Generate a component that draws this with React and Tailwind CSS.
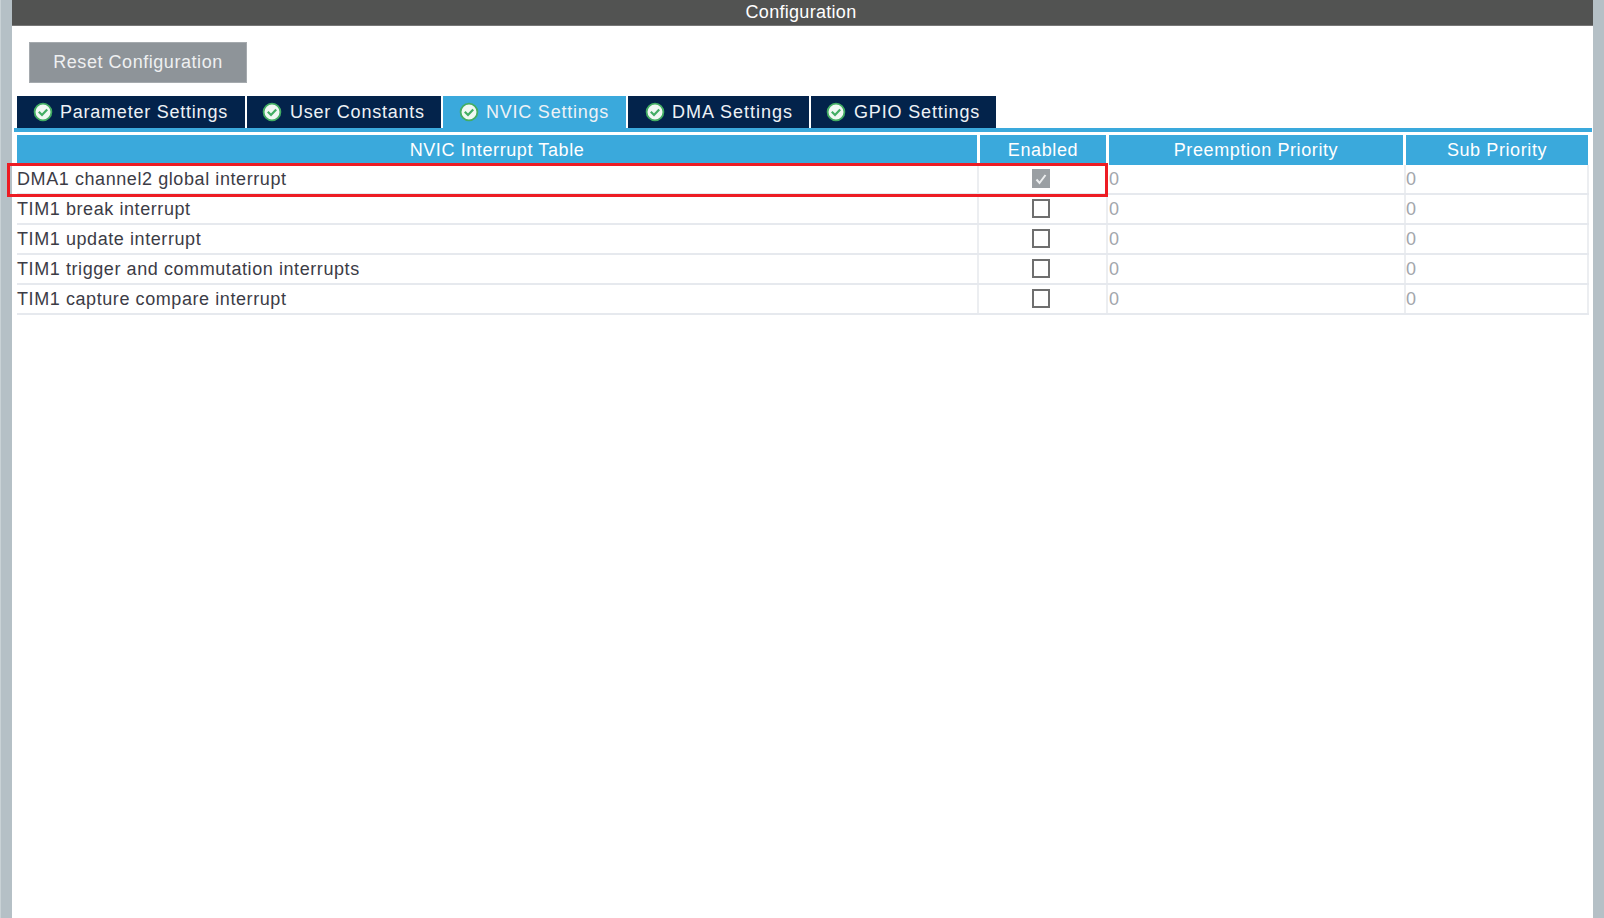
import React from 'react';

const tabs = [
  { name: 'Parameter Settings', width: 'w-[230px]', pad: 'pl-[16px] gap-[7px] tracking-[0.77px]' },
  { name: 'User Constants', width: 'w-[196px]', pad: 'pl-[15px] gap-[8px] tracking-[0.77px]' },
  { name: 'NVIC Settings', width: 'w-[185px]', pad: 'pl-[16px] gap-[7px] tracking-[0.77px]', active: true },
  { name: 'DMA Settings', width: 'w-[183px]', pad: 'pl-[17px] gap-[7px] tracking-[1px]' },
  { name: 'GPIO Settings', width: 'w-[187px]', pad: 'pl-[15px] gap-[8px] tracking-[0.85px]' },
];

const rows = [
  { name: 'DMA1 channel2 global interrupt', enabled: true },
  { name: 'TIM1 break interrupt' },
  { name: 'TIM1 update interrupt' },
  { name: 'TIM1 trigger and commutation interrupts' },
  { name: 'TIM1 capture compare interrupt' },
];

const columns = 'grid grid-cols-[963px_129px_297px_183px]';

const StatusIcon = () => (
  <svg className="w-[20px] h-[20px] shrink-0 -mt-[1px]" viewBox="0 0 20 20">
    <circle cx="10" cy="10" r="8.4" fill="#f1f8f3" stroke="#43ad63" strokeWidth="1.8" />
    <path d="M5.8 9.8l3.2 3.2 5.2-5.6" fill="none" stroke="#43ad63" strokeWidth="2.2" />
  </svg>
);

const Checkbox = ({ checked }) =>
  checked ? (
    <div className="w-[18px] h-[19px] -mt-[1px] bg-[#9a9fa3] flex items-center justify-center">
      <svg className="w-[14px] h-[14px]" viewBox="0 0 14 14">
        <path d="M2.5 7.5l3 3.5 6-8" fill="none" stroke="#eceeef" strokeWidth="2" />
      </svg>
    </div>
  ) : (
    <div className="w-[18px] h-[19px] -mt-[1px] bg-white border-2 border-[#6f6f6f]" />
  );

const HeaderCell = ({ children, last }) => (
  <div
    className={`h-[30px] pt-[1px] bg-[#3aa9dc] text-white flex items-center justify-center tracking-[0.6px] ${
      last ? 'mr-[1px]' : 'mr-[3px]'
    }`}
  >
    {children}
  </div>
);

const App = () => {
  return (
    <div className="h-[918px] w-[1604px] flex overflow-hidden bg-[#b5c0c6] font-['Liberation_Sans',Arial,sans-serif] text-[18px]">
      <div className="w-[12px] shrink-0 border-l border-[#c9d2d6]" />

      <div className="w-[1581px] bg-white flex flex-col">
        {/* Title bar */}
        <div className="h-[26px] shrink-0 bg-[#525352] border-b border-[#777] text-white flex items-center justify-center pr-[3px] tracking-[0.3px]">
          Configuration
        </div>

        {/* Reset button */}
        <div className="pt-[16px] pl-[17px]">
          <button className="w-[218px] h-[41px] bg-[#8e9499] border border-[#a5aaae] text-[#eef0f1] tracking-[0.55px]">
            Reset Configuration
          </button>
        </div>

        {/* Tabs */}
        <div className="mt-[13px] ml-[2px] mr-[1px] border-b-4 border-[#3aa9dc] flex pl-[3px]">
          {tabs.map((tab) => (
            <div
              key={tab.name}
              className={`${tab.width} ${tab.pad} h-[32px] pt-[1px] border-r-2 border-white flex items-center text-[#eef2f6] ${
                tab.active ? 'bg-[#3aa9dc]' : 'bg-[#03234b]'
              }`}
            >
              <StatusIcon />
              <span>{tab.name}</span>
            </div>
          ))}
        </div>

        {/* NVIC table */}
        <div className="relative mt-[3px] ml-[5px] w-[1572px]">
          <div className={columns}>
            <HeaderCell>NVIC Interrupt Table</HeaderCell>
            <HeaderCell>Enabled</HeaderCell>
            <HeaderCell>Preemption Priority</HeaderCell>
            <HeaderCell last>Sub Priority</HeaderCell>
          </div>

          {rows.map((row) => (
            <div key={row.name} className={`${columns} h-[30px] border-b-2 border-[#e6e9ee] text-[#3c3c46]`}>
              <div className="flex items-center border-r-2 border-[#eceef1] mr-[1px] tracking-[0.58px]">{row.name}</div>
              <div className="flex items-center border-r-2 border-[#eceef1] pl-[52px] mr-[1px]">
                <Checkbox checked={row.enabled} />
              </div>
              <div className="flex items-center border-r-2 border-[#eceef1] text-[#a2a6ac]">0</div>
              <div className="flex items-center border-r-2 border-[#eceef1] text-[#a2a6ac]">0</div>
            </div>
          ))}

          {/* Annotation box around the first row */}
          <div className="absolute left-[-10px] top-[28px] w-[1101px] h-[34px] border-[3px] border-[#ed1c24]" />
        </div>
      </div>

      <div className="flex-1" />
    </div>
  );
};

export default App;
